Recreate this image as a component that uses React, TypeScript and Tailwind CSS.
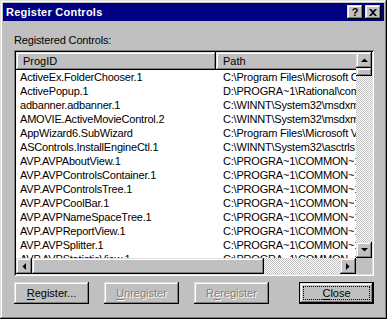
import React from 'react';

const rows: [string, string][] = [
  ['ActiveEx.FolderChooser.1', 'C:\\Program Files\\Microsoft Common\\fldrch.ocx'],
  ['ActivePopup.1', 'D:\\PROGRA~1\\Rational\\common\\popup.ocx'],
  ['adbanner.adbanner.1', 'C:\\WINNT\\System32\\msdxm.ocx'],
  ['AMOVIE.ActiveMovieControl.2', 'C:\\WINNT\\System32\\msdxm.ocx'],
  ['AppWizard6.SubWizard', 'C:\\Program Files\\Microsoft Visual Studio\\VB98'],
  ['ASControls.InstallEngineCtl.1', 'C:\\WINNT\\System32\\asctrls.ocx'],
  ['AVP.AVPAboutView.1', 'C:\\PROGRA~1\\COMMON~1\\AVPSha~1\\avpc.ocx'],
  ['AVP.AVPControlsContainer.1', 'C:\\PROGRA~1\\COMMON~1\\AVPSha~1\\avpc.ocx'],
  ['AVP.AVPControlsTree.1', 'C:\\PROGRA~1\\COMMON~1\\AVPSha~1\\avpc.ocx'],
  ['AVP.AVPCoolBar.1', 'C:\\PROGRA~1\\COMMON~1\\AVPSha~1\\avpc.ocx'],
  ['AVP.AVPNameSpaceTree.1', 'C:\\PROGRA~1\\COMMON~1\\AVPSha~1\\avpc.ocx'],
  ['AVP.AVPReportView.1', 'C:\\PROGRA~1\\COMMON~1\\AVPSha~1\\avpc.ocx'],
  ['AVP.AVPSplitter.1', 'C:\\PROGRA~1\\COMMON~1\\AVPSha~1\\avpc.ocx'],
  ['AVP.AVPStatisticView.1', 'C:\\PROGRA~1\\COMMON~1\\AVPSha~1\\avpc.ocx'],
];

const raised =
  'bg-[#c0c0c0] shadow-[inset_-1px_-1px_#000,inset_1px_1px_#dfdfdf,inset_-2px_-2px_#808080,inset_2px_2px_#fff]';

const dither =
  'bg-[repeating-conic-gradient(#fff_0_25%,#c0c0c0_0_50%)] bg-[length:2px_2px]';

function Arrow({ dir }: { dir: 'up' | 'down' | 'left' | 'right' }) {
  const pts = {
    up: '0,4 7,4 3.5,0.5',
    down: '0,0 7,0 3.5,3.5',
    left: '4,0 4,7 0.5,3.5',
    right: '0,0 0,7 3.5,3.5',
  }[dir];
  const horiz = dir === 'left' || dir === 'right';
  return (
    <div className={`w-[16px] h-[16px] shrink-0 flex items-center justify-center ${raised}`}>
      <svg width={horiz ? 4 : 7} height={horiz ? 7 : 4} viewBox={horiz ? '0 0 4 7' : '0 0 7 4'}>
        <polygon points={pts} fill="#000" />
      </svg>
    </div>
  );
}

function Btn({ label, ul, disabled }: { label: string; ul: number; disabled?: boolean }) {
  return (
    <div
      className={`w-[75px] h-[22px] flex items-center justify-center ${raised} ${
        disabled ? 'text-[#808080] [text-shadow:1px_1px_0_#fff]' : 'text-black'
      }`}
    >
      <span>
        {label.slice(0, ul)}
        <span className="underline underline-offset-[2px]">{label[ul]}</span>
        {label.slice(ul + 1)}
      </span>
    </div>
  );
}

export default function App() {
  return (
    <div className="w-[387px] h-[319px] bg-[#c0c0c0] p-[3px] flex flex-col font-['Liberation_Sans',Arial,sans-serif] text-[11px] text-black shadow-[inset_-1px_-1px_#000,inset_1px_1px_#dfdfdf,inset_-2px_-2px_#808080,inset_2px_2px_#fff]">
      {/* title bar */}
      <div className="h-[18px] bg-[#000080] flex items-center pl-[3px] pr-[3px]">
        <span className="text-white font-bold text-[11px] tracking-[0.25px] flex-1">Register Controls</span>
        <div className={`w-[16px] h-[14px] flex items-center justify-center ${raised}`}>
          <span className="font-bold text-[11px] leading-none">?</span>
        </div>
        <div className={`w-[16px] h-[14px] ml-[2px] flex items-center justify-center ${raised}`}>
          <svg width="8" height="7" viewBox="0 0 8 7">
            <path d="M0 0h2l2 2 2-2h2L5 3.5 8 7H6L4 5 2 7H0l3-3.5z" fill="#000" />
          </svg>
        </div>
      </div>

      <div className="flex flex-col pl-[11px] pr-[10px]">
        <div className="mt-[13px] leading-[13px] tracking-[-0.15px]">Registered Controls:</div>

        {/* list view */}
        <div className="mt-[3px] w-[360px] h-[226px] bg-white p-[2px] shadow-[inset_1px_1px_#808080,inset_-1px_-1px_#fff,inset_2px_2px_#000,inset_-2px_-2px_#dfdfdf]">
          <div className="grid grid-cols-[340px_16px] grid-rows-[206px_16px] w-full h-full">
            <div className="overflow-hidden">
              <div className="flex h-[18px] w-[600px]">
                <div className={`w-[200px] shrink-0 h-[18px] pl-[7px] flex items-center ${raised}`}>ProgID</div>
                <div className={`w-[300px] shrink-0 h-[18px] pl-[7px] flex items-center ${raised}`}>Path</div>
              </div>
              {rows.map(([id, path]) => (
                <div key={id} className="flex w-[600px] h-[14px] leading-[14px] whitespace-nowrap tracking-[-0.2px]">
                  <div className="w-[200px] shrink-0 pl-[4px] overflow-hidden">{id}</div>
                  <div className="w-[300px] shrink-0 pl-[7px] overflow-hidden">{path}</div>
                </div>
              ))}
            </div>
            <div className="flex flex-col">
              <Arrow dir="up" />
              <div className={`h-[8px] shrink-0 ${raised}`} />
              <div className={`flex-1 ${dither}`} />
              <Arrow dir="down" />
            </div>
            <div className="flex">
              <Arrow dir="left" />
              <div className={`w-[232px] shrink-0 ${raised}`} />
              <div className={`flex-1 ${dither}`} />
              <Arrow dir="right" />
            </div>
            <div className="bg-[#c0c0c0]" />
          </div>
        </div>

        {/* buttons */}
        <div className="mt-[6px] flex gap-[15px]">
          <Btn label="Register..." ul={0} />
          <Btn label="Unregister" ul={0} disabled />
          <Btn label="Reregister" ul={1} disabled />
          <div className="ml-auto w-[75px] h-[22px] border border-black flex">
            <div className={`flex-1 flex p-[3px] ${raised}`}>
              <div className="flex-1 border border-dotted border-black flex items-center justify-center">
                <span>
                  <span className="underline underline-offset-[2px]">C</span>lose
                </span>
              </div>
            </div>
          </div>
        </div>
      </div>
    </div>
  );
}
